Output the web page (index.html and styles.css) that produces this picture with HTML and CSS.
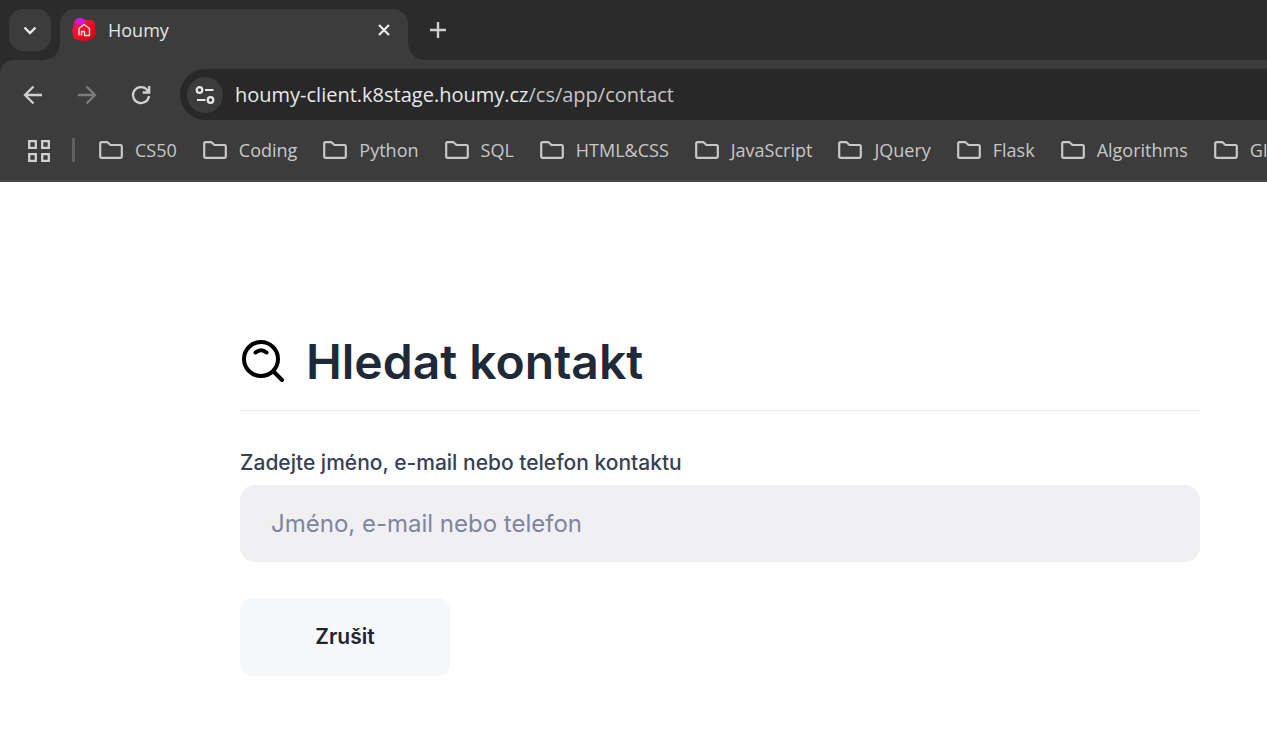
FILE: index.html
```html
<!DOCTYPE html>
<html lang="cs">
<head>
<meta charset="utf-8">
<meta name="viewport" content="width=device-width, initial-scale=1">
<title>Houmy</title>
<link rel="stylesheet" href="styles.css">
</head>
<body>
<svg class="defs" aria-hidden="true">
  <symbol id="folder" viewBox="0 0 24 18"><path d="M2.200 1.200h6.300l3 2.800h10a1.300 1.300 0 0 1 1.300 1.300v10.200a1.300 1.300 0 0 1-1.300 1.300H2.500a1.300 1.300 0 0 1-1.300-1.300V2.200a1 1 0 0 1 1-1z" fill="none" stroke="currentColor" stroke-width="2.200" stroke-linejoin="round"/></symbol>
</svg>
<header class="browser">
  <div class="tabstrip">
    <button class="tab-search" type="button" aria-label="Search tabs">
      <svg width="14" height="14" viewBox="0 0 14 14"><path d="M1.500 4.500L7 10l5.500-5.500" fill="none" stroke="currentColor" stroke-width="2.400"/></svg>
    </button>
    <div class="tab">
      <svg class="favicon" width="24" height="24" viewBox="0 0 24 24">
        <defs>
          <linearGradient id="red" x1="0" y1="0" x2="1" y2="1"><stop offset="0" stop-color="#e0108c"/><stop offset=".4" stop-color="#f0142c"/><stop offset="1" stop-color="#c80008"/></linearGradient>
          <radialGradient id="violet"><stop offset="0" stop-color="#c020ff"/><stop offset=".5" stop-color="#d818e0"/><stop offset="1" stop-color="#f01060" stop-opacity="0"/></radialGradient>
          <clipPath id="blob"><path d="M2 5Q3 0 9 0l4 2 6 0q4 1 4 5l1 7q0 5-4 7-5 3-9 2l-6-1q-4-1-4-5l-1-4z"/></clipPath>
        </defs>
        <g clip-path="url(#blob)"><rect width="24" height="24" fill="url(#red)"/><circle cx="8" cy="1" r="8" fill="url(#violet)"/></g>
        <path d="M7 17.500v-7l5-4 5.500 4v7h-5v-4H9.500v4" fill="none" stroke="#ffe4e4" stroke-width="1.400" stroke-linejoin="round"/>
      </svg>
      <span class="tab-title">Houmy</span>
      <button class="icon-button" type="button" aria-label="Close tab">
        <svg width="12" height="12" viewBox="0 0 12 12"><path d="M1 1l10 10M11 1L1 11" stroke="currentColor" stroke-width="2.200"/></svg>
      </button>
    </div>
    <button class="icon-button new-tab" type="button" aria-label="New tab">
      <svg width="16" height="16" viewBox="0 0 16 16"><path d="M8 0v16M0 8h16" stroke="currentColor" stroke-width="2.400"/></svg>
    </button>
  </div>
  <div class="toolbar">
    <nav class="history" aria-label="History">
      <button class="icon-button" type="button" aria-label="Back">
        <svg width="20" height="20" viewBox="0 0 20 20"><path d="M19 10H2M10.500 1.500L2 10l8.500 8.500" fill="none" stroke="currentColor" stroke-width="2.300"/></svg>
      </button>
      <button class="icon-button" type="button" aria-label="Forward" disabled>
        <svg width="20" height="20" viewBox="0 0 20 20"><path d="M1 10h17M9.500 1.500L18 10l-8.500 8.500" fill="none" stroke="currentColor" stroke-width="2.300"/></svg>
      </button>
      <button class="icon-button" type="button" aria-label="Reload">
        <svg width="20" height="20" viewBox="0 0 20 20"><path d="M18 11a8 8 0 1 1-2.500-6.800L18 7M18.200 1v6.500h-6.500" fill="none" stroke="currentColor" stroke-width="2.300"/></svg>
      </button>
    </nav>
    <div class="omnibox">
      <button class="site-info" type="button" aria-label="View site information">
        <svg width="20" height="18" viewBox="0 0 20 18"><g fill="none" stroke="currentColor" stroke-width="2.200"><circle cx="4.500" cy="4" r="2.800"/><circle cx="15.500" cy="14" r="2.800"/><path d="M10 4h8.500M2 14h8.500"/></g></svg>
      </button>
      <div class="url"><span class="host">houmy-client.k8stage.houmy.cz</span>/cs/app/contact</div>
    </div>
  </div>
  <nav class="bookmarks" aria-label="Bookmarks">
    <button class="icon-button apps" type="button" aria-label="Apps">
      <svg width="22" height="22" viewBox="0 0 22 22"><path d="M1.200 1.200h6.600v6.600H1.200zM14.200 1.200h6.600v6.600h-6.600zM1.200 14.200h6.600v6.600H1.200zM14.200 14.200h6.600v6.600h-6.600z" fill="none" stroke="currentColor" stroke-width="2.300"/></svg>
    </button>
    <span class="divider"></span>
    <a class="bookmark" href="#"><svg><use href="#folder"/></svg>CS50</a>
    <a class="bookmark" href="#"><svg><use href="#folder"/></svg>Coding</a>
    <a class="bookmark" href="#"><svg><use href="#folder"/></svg>Python</a>
    <a class="bookmark" href="#"><svg><use href="#folder"/></svg>SQL</a>
    <a class="bookmark" href="#"><svg><use href="#folder"/></svg>HTML&amp;CSS</a>
    <a class="bookmark" href="#"><svg><use href="#folder"/></svg>JavaScript</a>
    <a class="bookmark" href="#"><svg><use href="#folder"/></svg>JQuery</a>
    <a class="bookmark" href="#"><svg><use href="#folder"/></svg>Flask</a>
    <a class="bookmark" href="#"><svg><use href="#folder"/></svg>Algorithms</a>
    <a class="bookmark" href="#"><svg><use href="#folder"/></svg>GIT</a>
  </nav>
</header>
<main class="page">
  <div class="heading">
    <svg width="48" height="48" viewBox="0 0 48 48" aria-hidden="true"><g fill="none" stroke="#000" stroke-width="4" stroke-linecap="round"><circle cx="21" cy="21" r="17"/><path d="M34 34l8 8M15.500 14.500q5.500-4.500 11 0"/></g></svg>
    <h1>Hledat kontakt</h1>
  </div>
  <form class="search-form">
    <label for="contact">Zadejte jméno, e-mail nebo telefon kontaktu</label>
    <input id="contact" type="text" placeholder="Jméno, e-mail nebo telefon">
    <button class="cancel" type="button">Zrušit</button>
  </form>
</main>
</body>
</html>
```
FILE: styles.css
```css
* {
  box-sizing: border-box;
}

body {
  margin: 0;
  background: #fff;
  font-family: Inter, sans-serif;
  overflow-x: hidden;
}

button {
  border: 0;
  padding: 0;
  font: inherit;
}

svg {
  display: block;
  flex: none;
}

.defs {
  display: none;
}

.browser {
  background: #3c3c3c;
  color: #dedede;
  font-family: "Open Sans", "Noto Sans", sans-serif;
  border-bottom: 2px solid #484848;
  overflow: hidden;
}

.tabstrip {
  display: flex;
  align-items: flex-end;
  height: 60px;
  padding-left: 9px;
  background: #2b2b2b;
}

.tab-search {
  display: grid;
  place-items: center;
  width: 42px;
  height: 42px;
  margin: 0 9px 9px 0;
  border-radius: 14px;
  background: #3c3c3c;
  color: #e8e8e8;
}

.tab {
  position: relative;
  display: flex;
  align-items: center;
  gap: 12px;
  width: 348px;
  height: 51px;
  padding: 0 14px 9px 12px;
  border-radius: 15px 15px 0 0;
  background: #3c3c3c;
}

.tab::before,
.tab::after {
  content: "";
  position: absolute;
  bottom: 0;
  width: 15px;
  height: 15px;
}

.tab::before {
  right: 100%;
  background: radial-gradient(circle at 0 0, transparent 14px, #3c3c3c 15px);
}

.tab::after {
  left: 100%;
  background: radial-gradient(circle at 100% 0, transparent 14px, #3c3c3c 15px);
}

.tab-title {
  flex: 1;
  color: #e6e6e6;
  font-size: 18px;
  line-height: 24px;
}

.icon-button {
  display: grid;
  place-items: center;
  width: 20px;
  height: 20px;
  background: none;
  color: #d0d0d0;
}

.icon-button:disabled {
  color: #7d7d7d;
}

.tab .icon-button {
  color: #e8e8e8;
}

.new-tab {
  margin: 0 0 20px 20px;
}

.toolbar {
  display: flex;
  align-items: center;
  gap: 29px;
  padding: 9px 0 0 23px;
  background: radial-gradient(circle at 12px 12px, #3c3c3c 11px, #2b2b2b 12px) 0 0 / 12px 12px no-repeat;
}

.history {
  display: flex;
  gap: 34px;
}

.omnibox {
  display: flex;
  flex: 1;
  align-items: center;
  gap: 12px;
  height: 51px;
  padding-left: 7px;
  border-radius: 26px 0 0 26px;
  background: #282828;
}

.site-info {
  display: grid;
  place-items: center;
  width: 36px;
  height: 36px;
  border-radius: 50%;
  background: #3c3c3c;
  color: #e6e6e6;
}

.url {
  color: #c4c4c4;
  font-size: 20px;
  line-height: 28px;
}

.host {
  color: #e8e8e8;
}

.bookmarks {
  display: flex;
  align-items: center;
  gap: 26px;
  height: 60px;
  padding: 0 0 1px 28px;
}

.apps {
  width: 22px;
  margin-right: -4px;
}

.divider {
  flex: none;
  width: 3px;
  height: 24px;
  margin-right: -2px;
  background: #606060;
}

.bookmark {
  display: flex;
  flex: none;
  align-items: center;
  gap: 12px;
  color: #c8c8c8;
  font-size: 18px;
  line-height: 24px;
  text-decoration: none;
  white-space: nowrap;
}

.bookmark svg {
  width: 24px;
  height: 18px;
}

.page {
  padding: 150px 67px 69px 240px;
}

.heading {
  display: flex;
  align-items: center;
  gap: 18px;
  padding-bottom: 18px;
  border-bottom: 1px solid #ebecee;
}

.heading h1 {
  margin: 0;
  color: #1f2937;
  font-size: 48px;
  font-weight: 600;
  line-height: 60px;
}

.search-form {
  display: flex;
  flex-direction: column;
  align-items: flex-start;
  padding-top: 36px;
}

.search-form label {
  margin-bottom: 6px;
  color: #374151;
  font-size: 21px;
  font-weight: 500;
  line-height: 32px;
}

.search-form input {
  width: 100%;
  height: 77px;
  margin-bottom: 36px;
  padding: 0 31px;
  border: 0;
  border-radius: 15px;
  background: #f0f0f2;
  color: #1f2937;
  font: 24px/36px Inter, sans-serif;
}

.search-form input::placeholder {
  color: #7f859f;
  opacity: 1;
}

.cancel {
  width: 210px;
  height: 78px;
  padding-bottom: 1px;
  border-radius: 12px;
  background: #f5f7f9;
  color: #1f2430;
  font-size: 21px;
  font-weight: 600;
}
```
